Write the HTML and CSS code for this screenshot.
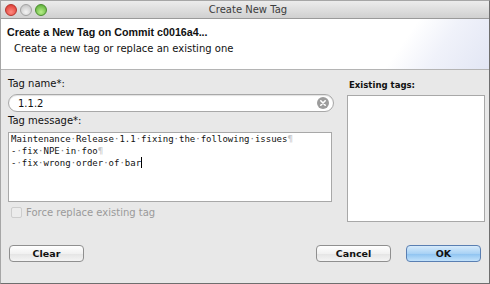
FILE: index.html
```html
<!DOCTYPE html>
<html lang="en">
<head>
    <meta charset="UTF-8">
    <meta name="viewport" content="width=device-width, initial-scale=1.0">
    <title>Create New Tag</title>
    <link rel="stylesheet" href="styles.css">
</head>
<body>
    <div class="window">
        <div class="titlebar">
            <div class="lights">
                <span class="light red"></span>
                <span class="light gray"></span>
                <span class="light green"></span>
            </div>
            <div class="title">Create New Tag</div>
            <div></div>
        </div>
        <div class="banner">
            <div class="banner-title">Create a New Tag on Commit c0016a4...</div>
            <div class="banner-msg">Create a new tag or replace an existing one</div>
        </div>
        <div class="content">
            <div class="main">
                <div class="left">
                    <div class="label">Tag name*:</div>
                    <div class="search">
                        <span class="search-text">1.1.2</span>
                        <svg class="clear-icon" width="12" height="12" viewBox="0 0 12 12">
                            <circle cx="6" cy="6" r="6" fill="#9c9c9c"/>
                            <path d="M3.8 3.8 L8.2 8.2 M8.2 3.8 L3.8 8.2" stroke="#fff" stroke-width="1.6" stroke-linecap="round"/>
                        </svg>
                    </div>
                    <div class="label label-msg">Tag message*:</div>
                    <div class="message">
                        <div class="line">Maintenance<i>·</i>Release<i>·</i>1.1<i>·</i>fixing<i>·</i>the<i>·</i>following<i>·</i>issues<b>¶</b></div>
                        <div class="line">-<i>·</i>fix<i>·</i>NPE<i>·</i>in<i>·</i>foo<b>¶</b></div>
                        <div class="line">-<i>·</i>fix<i>·</i>wrong<i>·</i>order<i>·</i>of<i>·</i>bar<span class="caret"></span></div>
                    </div>
                    <label class="check">
                        <span class="box"></span>
                        <span>Force replace existing tag</span>
                    </label>
                </div>
                <div class="right">
                    <div class="label label-bold">Existing tags:</div>
                    <div class="tag-list"></div>
                </div>
            </div>
            <div class="buttons">
                <button class="btn">Clear</button>
                <div class="spacer"></div>
                <button class="btn">Cancel</button>
                <button class="btn primary">OK</button>
            </div>
        </div>
    </div>
</body>
</html>
```

FILE: styles.css
```css
body {
    margin: 0;
    font-family: 'DejaVu Sans', sans-serif;
    color: #111;
    background: #fff;
}
.window {
    width: 490px;
    height: 284px;
    box-sizing: border-box;
    border: 1px solid #a6a6a6;
    border-right-color: #6e6e6e;
    border-bottom-color: #6e6e6e;
    display: flex;
    flex-direction: column;
    background: #e8e8e8;
}
.titlebar {
    height: 17px;
    display: grid;
    grid-template-columns: 1fr auto 1fr;
    align-items: center;
    background: linear-gradient(#ececec, #d0d0d0);
    border-bottom: 1px solid #9a9a9a;
}
.lights { display: flex; gap: 3px; padding-left: 4px; }
.light {
    width: 12px;
    height: 12px;
    border-radius: 50%;
    box-sizing: border-box;
}
.light.red { background: radial-gradient(circle at 50% 70%, #ff8a80, #d8312a); border: 1px solid #b4332c; }
.light.gray { background: radial-gradient(circle at 50% 70%, #f4f4f4, #bcbcbc); border: 1px solid #a2a2a2; }
.light.green { background: radial-gradient(circle at 50% 70%, #b8f08a, #4fa52c); border: 1px solid #4a8c2e; }
.title { font-size: 10px; color: #3c3c3c; padding-left: 6px; }
.banner {
    height: 51px;
    background: linear-gradient(125deg, #fff 80%, #f0f2fa 88%, #e2e6f4 100%);
    border-bottom: 1px solid #b4b4b4;
    box-sizing: border-box;
}
.banner-title {
    font-family: 'Liberation Sans', sans-serif;
    font-size: 10.7px;
    font-weight: bold;
    padding: 7px 0 0 6px;
}
.banner-msg {
    font-size: 10px;
    padding: 5px 0 0 13px;
}
.content {
    flex: 1;
    padding: 7px 4px 0 7px;
}
.main { display: flex; gap: 13px; }
.left { width: 326px; }
.right { width: 138px; }
.label { font-size: 10px; line-height: 14px; }
.label-bold {
    font-family: 'DejaVu Sans Condensed', 'DejaVu Sans', sans-serif;
    font-weight: bold;
    font-size: 9.5px;
    margin-top: 1px;
    padding-left: 2px;
}
.label-msg { margin-top: 2px; }
.search {
    margin-top: 3px;
    height: 18px;
    box-sizing: border-box;
    border: 1px solid #a8a8a8;
    border-radius: 9px;
    background: #fff;
    display: flex;
    align-items: center;
    padding: 0 4px 0 9px;
    box-shadow: inset 0 1px 1px rgba(0,0,0,0.12);
}
.search-text { flex: 1; font-size: 10px; }
.message {
    margin-top: 4px;
    width: 324px;
    height: 70px;
    box-sizing: border-box;
    border: 1px solid #a8a8a8;
    background: #fff;
    padding: 1px 2px;
    font-family: 'DejaVu Sans Mono', monospace;
    font-size: 9px;
    line-height: 11.5px;
}
.line { white-space: pre; }
.message i { font-style: normal; color: #777; }
.message b { font-weight: normal; color: #c4c4c4; }
.caret {
    display: inline-block;
    width: 1px;
    height: 11px;
    background: #000;
    vertical-align: -2px;
}
.check {
    margin-top: 5px;
    display: flex;
    align-items: center;
    gap: 4px;
    font-size: 10px;
    color: #9a9a9a;
    padding-left: 3px;
}
.box {
    width: 11px;
    height: 11px;
    box-sizing: border-box;
    border: 1px solid #cdcdcd;
    border-radius: 2px;
    background: #ececec;
}
.tag-list {
    margin-top: 3px;
    height: 127px;
    box-sizing: border-box;
    border: 1px solid #a8a8a8;
    background: #fff;
}
.buttons {
    display: flex;
    gap: 15px;
    margin-top: 23px;
    padding-left: 1px;
    padding-right: 4px;
}
.spacer { flex: 1; }
.btn {
    width: 75px;
    height: 17px;
    box-sizing: border-box;
    padding: 0;
    border: 1px solid #8f8f8f;
    border-radius: 4px;
    background: linear-gradient(#ffffff, #f1f1f1 50%, #e4e4e4 51%, #f4f4f4);
    font-family: 'DejaVu Sans', sans-serif;
    font-size: 9.5px;
    font-weight: bold;
    color: #111;
}
.btn.primary {
    border-color: #5a7fb2;
    background: linear-gradient(#d7ebfb, #a9d2f5 50%, #8cc2f0 51%, #c2e2fb);
}
```
